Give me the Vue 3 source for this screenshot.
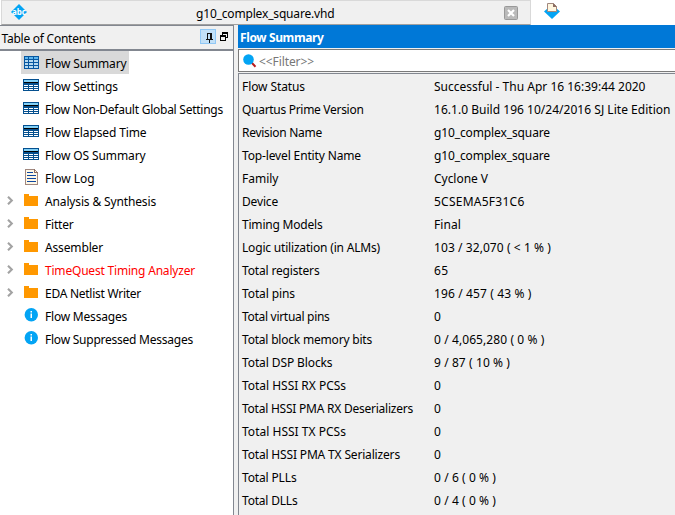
<script setup>
// Spreads the letters so that a label takes up the given width in pixels.
const vFit = {
  mounted(el, { value }) {
    if (!value) return
    const natural = el.getBoundingClientRect().width
    el.style.letterSpacing = (value - natural) / el.textContent.length + 'px'
  },
}

const tree = [
  { label: 'Flow Summary', icon: 'grid', w: 81.5, selected: true },
  { label: 'Flow Settings', icon: 'table', w: 73 },
  { label: 'Flow Non-Default Global Settings', icon: 'table', w: 178 },
  { label: 'Flow Elapsed Time', icon: 'table', w: 101.5 },
  { label: 'Flow OS Summary', icon: 'table', w: 100.5 },
  { label: 'Flow Log', icon: 'log', w: 49.5 },
  { label: 'Analysis & Synthesis', icon: 'folder', w: 111 },
  { label: 'Fitter', icon: 'folder', w: 28.5 },
  { label: 'Assembler', icon: 'folder', w: 58 },
  { label: 'TimeQuest Timing Analyzer', icon: 'folder', w: 150, alert: true },
  { label: 'EDA Netlist Writer', icon: 'folder', w: 96 },
  { label: 'Flow Messages', icon: 'info', w: 82 },
  { label: 'Flow Suppressed Messages', icon: 'info', w: 148 },
]

const rows = [
  ['Flow Status', 63, 'Successful - Thu Apr 16 16:39:44 2020', 211.5],
  ['Quartus Prime Version', 121.5, '16.1.0 Build 196 10/24/2016 SJ Lite Edition', 236.5],
  ['Revision Name', 80, 'g10_complex_square', 116],
  ['Top-level Entity Name', 119, 'g10_complex_square', 116],
  ['Family', 36.5, 'Cyclone V', 54],
  ['Device', 36, '5CSEMA5F31C6', 90.5],
  ['Timing Models', 80.5, 'Final', 27],
  ['Logic utilization (in ALMs)', 138, '103 / 32,070 ( < 1 % )', 117],
  ['Total registers', 77.5, '65', 14.5],
  ['Total pins', 53, '196 / 457 ( 43 % )', 97.5],
  ['Total virtual pins', 87.5, '0', 0],
  ['Total block memory bits', 130, '0 / 4,065,280 ( 0 % )', 110.5],
  ['Total DSP Blocks', 90.5, '9 / 87 ( 10 % )', 76],
  ['Total HSSI RX PCSs', 104, '0', 0],
  ['Total HSSI PMA RX Deserializers', 171, '0', 0],
  ['Total HSSI TX PCSs', 104, '0', 0],
  ['Total HSSI PMA TX Serializers', 158, '0', 0],
  ['Total PLLs', 54.5, '0 / 6 ( 0 % )', 62],
  ['Total DLLs', 55.5, '0 / 4 ( 0 % )', 62],
]
</script>

<template>
  <div class="window">
    <div class="tabs">
      <div class="tab">
        <svg class="abc" width="16" height="16" viewBox="0 0 16 16">
          <path d="M8 0L16 8L8 16L0 8Z" fill="#03a4f4" />
          <text x="8" y="10.8" text-anchor="middle" textLength="14" lengthAdjust="spacingAndGlyphs">abc</text>
        </svg>
        <div class="tab-title"><span v-fit="138.5">g10_complex_square.vhd</span></div>
        <svg class="close" width="14" height="14" viewBox="0 0 14 14">
          <rect x=".5" y=".5" width="13" height="13" rx="1" fill="#bababa" stroke="#999" />
          <path d="M4 4L10 10M10 4L4 10" stroke="#fff" stroke-width="2.2" />
        </svg>
      </div>
      <svg class="report" width="16" height="16" viewBox="0 0 16 16">
        <path d="M0 8.5L4 5H12L16 8.5L8 16Z" fill="#03a4f4" />
        <path d="M3.5 .5H9.5L12.5 3.5V8.5H3.5Z" fill="#fff6df" stroke="#a1887f" />
        <path d="M9 0V4H13Z" fill="#8d6e63" />
      </svg>
    </div>

    <div class="body">
      <aside class="contents">
        <header class="contents-head">
          <span v-fit="94" class="contents-title">Table of Contents</span>
          <span class="pin">
            <svg width="16" height="15" viewBox="0 0 16 15" shape-rendering="crispEdges">
              <path d="M7 4H12V10H7ZM6 10H13V11H6ZM9 11H10V14H9Z" fill="#111" />
              <path d="M8 5H10V10H8Z" fill="#c2e0f7" />
            </svg>
          </span>
          <svg class="float" width="9" height="9" viewBox="0 0 9 9" shape-rendering="crispEdges">
            <path d="M2 0H8V6H6V5H7V2H3V3H2ZM0 3H6V9H0ZM1 5V8H5V5Z" fill="#000" fill-rule="evenodd" />
          </svg>
        </header>
        <ul class="tree">
          <li v-for="item in tree" :key="item.label">
            <span class="arrow">
              <svg v-if="item.icon === 'folder'" width="7" height="9" viewBox="0 0 7 9">
                <path d="M1 .7L4.8 4.5L1 8.3" fill="none" stroke="#a3a3a3" stroke-width="2.1" />
              </svg>
            </span>
            <span class="node" :class="{ selected: item.selected, alert: item.alert }">
              <svg width="18" height="18" viewBox="0 0 18 18" shape-rendering="crispEdges">
                <template v-if="item.icon === 'grid'">
                  <rect x="2" y="2" width="15" height="13" fill="#0757a0" />
                  <path d="M3 3H6V5H3ZM7 3H11V5H7ZM12 3H16V5H12Z" fill="#5cb5ee" />
                  <path d="M3 6H6V8H3ZM7 6H11V8H7ZM12 6H16V8H12ZM3 9H6V11H3ZM7 9H11V11H7ZM12 9H16V11H12ZM3 12H6V14H3ZM7 12H11V14H7ZM12 12H16V14H12Z" fill="#b5d9f0" />
                </template>
                <template v-else-if="item.icon === 'table'">
                  <rect x="1" y="2" width="16" height="12" fill="#05508f" />
                  <rect x="2" y="3" width="14" height="2" fill="#81d0f7" />
                  <rect x="2" y="5" width="14" height="1" fill="#000" />
                  <path d="M2 8H6V9H2ZM7 8H11V9H7ZM12 8H16V9H12ZM2 10H6V11H2ZM7 10H11V11H7ZM12 10H16V11H12ZM2 12H6V13H2ZM7 12H11V13H7ZM12 12H16V13H12Z" fill="#fff" />
                </template>
                <template v-else-if="item.icon === 'log'">
                  <path d="M3.5 .5H12.5L15.5 3.5V15.5H3.5Z" fill="#fff8e6" stroke="#a1887f" />
                  <path d="M12 0H13V3H16V4H12Z" fill="#8d6e63" />
                  <path d="M5 3H11V4H5ZM5 6H14V7H5ZM5 9H14V10H5ZM5 12H14V13H5Z" fill="#0d47a1" />
                </template>
                <path v-else-if="item.icon === 'folder'" d="M2 2H7V4H16V14H2Z" fill="#ff9800" />
                <g v-else shape-rendering="auto">
                  <circle cx="9.3" cy="7.8" r="6.7" fill="#03a4f4" />
                  <path d="M8.5 4H10V5.5H8.5ZM8.5 6.5H10V11H8.5Z" fill="#fff" />
                </g>
              </svg>
              <span v-fit="item.w" class="label">{{ item.label }}</span>
            </span>
          </li>
        </ul>
      </aside>

      <main class="report-pane">
        <header class="title"><span v-fit="83.5">Flow Summary</span></header>
        <div class="filter">
          <svg width="14" height="14" viewBox="0 0 14 14">
            <path d="M8.5 8.5L12.5 12.8" stroke="#b71c1c" stroke-width="2" />
            <circle cx="5.5" cy="5.5" r="5.3" fill="#03a4f4" />
          </svg>
          <span v-fit="55" class="hint">&lt;&lt;Filter&gt;&gt;</span>
        </div>
        <div class="summary">
          <div v-for="row in rows" :key="row[0]" class="row">
            <div><span v-fit="row[1]">{{ row[0] }}</span></div>
            <div><span v-fit="row[3]">{{ row[2] }}</span></div>
          </div>
        </div>
      </main>
    </div>
  </div>
</template>

<style>
body {
  overflow: hidden;
}
</style>

<style scoped>
.window {
  width: 675px;
  height: 515px;
  display: flex;
  flex-direction: column;
  overflow: hidden;
  background: #fff;
  color: #000;
  font: 12px/23px "Noto Sans", sans-serif;
  white-space: pre;
}
svg {
  flex: none;
  display: block;
}
.tabs {
  height: 25px;
  flex: none;
  display: flex;
}
.tab {
  box-sizing: border-box;
  width: 530px;
  margin-left: 1px;
  border: 1px solid #d9d9d9;
  border-bottom-color: #a0a0a0;
  background: #f0f0f0;
  display: flex;
  align-items: flex-start;
}
.abc {
  margin: 3px 0 0 9px;
}
.abc text {
  fill: #fff;
  font: bold 9px "Noto Sans", sans-serif;
}
.tab-title {
  flex: 1;
  padding: 1px 0 0 169px;
}
.close {
  margin: 5px 12px 0 0;
}
.report {
  margin: 3px 0 0 13px;
}
.body {
  flex: 1;
  min-height: 0;
  display: flex;
  background: #f0f0f0;
}
.contents {
  box-sizing: border-box;
  width: 234px;
  flex: none;
  border-right: 1px solid #828790;
  background: #fff;
}
.contents-head {
  box-sizing: border-box;
  height: 26px;
  border-top: 1px solid #828790;
  border-bottom: 2px solid #828790;
  background: #f0f0f0;
  display: flex;
  align-items: flex-start;
  padding-left: 1.5px;
}
.contents-title {
  padding-top: 1px;
}
.pin {
  box-sizing: border-box;
  width: 16px;
  height: 15px;
  margin: 3px 4px 0 auto;
  background: #c2e0f7;
  outline: 1px solid #90c8f6;
  outline-offset: -1px;
}
.float {
  margin: 6px 4px 0 0;
}
.tree {
  list-style: none;
  margin: 0;
  padding: 0;
}
.tree li {
  height: 23px;
  display: flex;
}
.arrow {
  width: 21px;
  box-sizing: border-box;
  padding: 7px 0 0 7px;
}
.node {
  display: flex;
  padding-right: 2.5px;
}
.node svg {
  margin: 3px 5px 0 1px;
}
.label {
  padding-top: 1px;
}
.selected {
  background: #d9d9d9;
  height: 23px;
}
.alert {
  color: #f00;
}
.report-pane {
  flex: 1;
  min-width: 0;
  margin-left: 4px;
  display: flex;
  flex-direction: column;
}
.title {
  height: 23px;
  flex: none;
  background: #0078d7;
  color: #fff;
  font-weight: 700;
  padding: 1px 0 0 2px;
  box-sizing: border-box;
}
.filter {
  box-sizing: border-box;
  height: 23px;
  flex: none;
  margin-top: 1px;
  border: 1px solid #7a7a7a;
  border-right: 0;
  background: #fff;
  color: #777;
  display: flex;
  align-items: center;
  gap: 2px;
  padding-left: 4px;
}
.hint {
  padding-top: 2px;
}
.summary {
  flex: 1;
  margin-top: 1px;
  border-top: 1px solid #828790;
  border-left: 1px solid #828790;
  padding: 1px 0 0 3px;
  overflow: hidden;
}
.row {
  height: 23px;
  display: grid;
  grid-template-columns: 192px 1fr;
}
</style>
